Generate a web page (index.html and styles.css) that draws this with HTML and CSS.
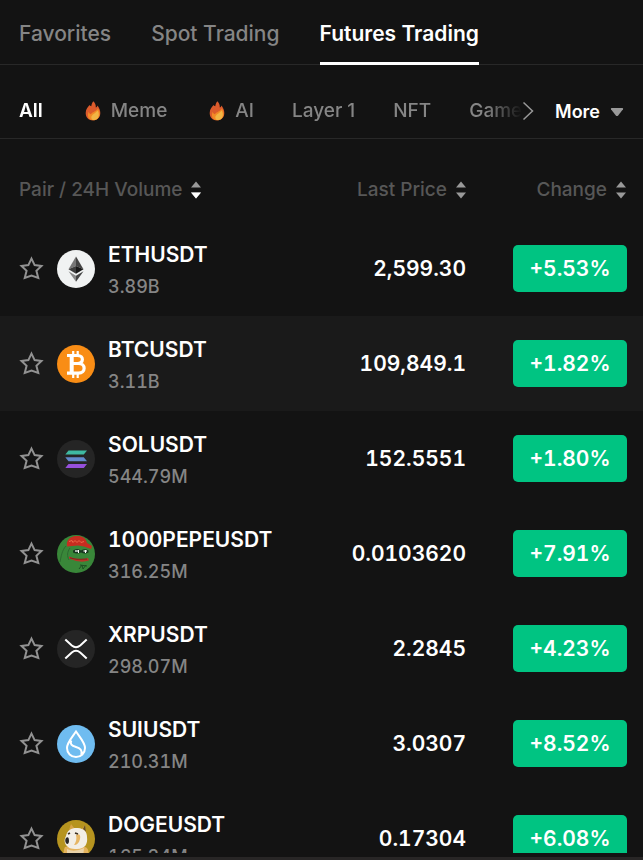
FILE: index.html
```html
<!DOCTYPE html>
<html lang="en">
<head>
<meta charset="utf-8">
<meta name="viewport" content="width=device-width, initial-scale=1">
<title>Markets</title>
<link rel="stylesheet" href="styles.css">
</head>
<body>
<svg class="sprite" aria-hidden="true">
  <symbol id="star" viewBox="0 0 24 24"><path d="m12 2.500 3 6.200 6.600.8-4.900 4.700 1.800 6.800L12 18.800l-6.500 2.200 1.800-6.800L2.400 9.500 9 8.700z" fill="none" stroke="currentColor" stroke-width="1.900"/></symbol>
  <symbol id="flame" viewBox="0 0 16 20"><path d="M8.300.3C7 1.900 6.500 3.500 6.300 5.200 5.500 5.200 5 4.700 4.600 4.100 3 5.700.7 8.200.7 12c0 4.500 2.700 7.300 7.100 7.300 4.500 0 7.500-2.800 7.500-7.300 0-2.800-1.200-5.300-2.800-7.400-.3 1-.9 1.700-1.700 1.900C11 4 10 1.700 8.300.3z" fill="#dc5b2c"/><path d="M12.700 7.500c-.8 2.600-4.700 3-6.900 5.700-1.300-.6-1.900-1.500-2.200-2.500-1.800 4.400.1 8.500 4.400 8.500 4.100 0 6.700-2.500 6.700-6.500 0-2.200-.8-3.900-2-5.200z" fill="#f28a26"/><path d="M12.600 9.400c-1.200 2.300-6.300 3.800-6.300 7 0 1.700 1.200 2.600 2.800 2.600 3.100 0 4.700-2.600 4.700-5.400 0-1.700-.4-3-1.200-4.200z" fill="#f2b544"/></symbol>
  <symbol id="sort" viewBox="0 0 12 18"><path class="up" d="M6 .5 11 6.500H1z"/><path class="down" d="M6 17.500 1 11.500h10z"/></symbol>
</svg>

<nav class="tabs">
  <a class="tab" href="#favorites">Favorites</a>
  <a class="tab" href="#spot">Spot Trading</a>
  <a class="tab active" href="#futures" aria-current="page">Futures Trading</a>
</nav>

<div class="filters">
  <div class="filter-list">
    <button class="filter active">All</button>
    <button class="filter"><svg class="flame"><use href="#flame"/></svg>Meme</button>
    <button class="filter"><svg class="flame"><use href="#flame"/></svg>AI</button>
    <button class="filter">Layer 1</button>
    <button class="filter">NFT</button>
    <button class="filter">Game</button>
  </div>
  <button class="next" aria-label="Next"><svg viewBox="0 0 12 20"><path d="M1.500 1.500 10.500 10l-9 8.500" fill="none" stroke="currentColor" stroke-width="1.500"/></svg></button>
  <button class="more">More<svg viewBox="0 0 14 10"><path d="M1.500 1h11q1 .2.500 1.200L8.200 8.400Q7 9.600 5.800 8.400L1 2.200Q.5 1.200 1.500 1z" fill="currentColor"/></svg></button>
</div>

<main class="market">
<table>
  <thead>
    <tr>
      <th class="pair"><button class="sort desc">Pair / 24H Volume<svg><use href="#sort"/></svg><svg class="on" viewBox="0 0 12 18"><path d="M6 17.500 1 11.500h10z"/></svg></button></th>
      <th class="price"><button class="sort">Last Price<svg><use href="#sort"/></svg></button></th>
      <th class="change"><button class="sort">Change<svg><use href="#sort"/></svg></button></th>
    </tr>
  </thead>
  <tbody>
    <tr>
      <td><div class="coin"><button class="fav" aria-label="Favorite ETHUSDT"><svg><use href="#star"/></svg></button>
        <svg class="logo" viewBox="0 0 38 38"><circle cx="19" cy="19" r="19" fill="#f0f2f2"/><path d="m19 6.500-7.500 12.700L19 16z" fill="#777"/><path d="m19 6.500 7.500 12.700L19 16z" fill="#444"/><path d="m11.500 19.200 7.500 4.500V16z" fill="#3c3c3c"/><path d="m26.500 19.200-7.500 4.500V16z" fill="#181818"/><path d="m11.500 21.200 7.500 4.600v6z" fill="#888"/><path d="M26.500 21.200 19 25.800v6z" fill="#444"/></svg>
        <div class="names"><span class="symbol">ETHUSDT</span><span class="volume">3.89B</span></div></div></td>
      <td class="price">2,599.30</td><td class="change"><span class="badge">+5.53%</span></td>
    </tr>
    <tr class="hover">
      <td><div class="coin"><button class="fav" aria-label="Favorite BTCUSDT"><svg><use href="#star"/></svg></button>
        <svg class="logo" viewBox="0 0 38 38"><circle cx="19" cy="19" r="19" fill="#f98d15"/><g fill="none" stroke="#fff"><path d="M16.200 6v6M20.700 6v6M16.200 27v6M20.700 27v6" stroke-width="2.200"/><path d="M10 10.500h10.500c6.500 0 6.500 8 0 8H15M10 28.200h11.500c7.500 0 7.500-9.700 0-9.700" stroke-width="3.200"/><path d="M14.700 11v17" stroke-width="4"/></g></svg>
        <div class="names"><span class="symbol">BTCUSDT</span><span class="volume">3.11B</span></div></div></td>
      <td class="price">109,849.1</td><td class="change"><span class="badge">+1.82%</span></td>
    </tr>
    <tr>
      <td><div class="coin"><button class="fav" aria-label="Favorite SOLUSDT"><svg><use href="#star"/></svg></button>
        <svg class="logo" viewBox="0 0 38 38"><circle cx="19" cy="19" r="19" fill="#252525"/><path d="M11.500 10.500H30l-3.200 4H8.300z" fill="#3fb9a2"/><path d="M8.300 17.200h18.500l3.200 4H11.500z" fill="#6389cc"/><path d="M11.500 24H30l-3.200 4H8.300z" fill="#9650dc"/></svg>
        <div class="names"><span class="symbol">SOLUSDT</span><span class="volume">544.79M</span></div></div></td>
      <td class="price">152.5551</td><td class="change"><span class="badge">+1.80%</span></td>
    </tr>
    <tr>
      <td><div class="coin"><button class="fav" aria-label="Favorite 1000PEPEUSDT"><svg><use href="#star"/></svg></button>
        <svg class="logo" viewBox="0 0 38 38"><circle cx="19" cy="19" r="19" fill="#398739"/><path d="M9 11C5 15 4 22 3 27M13 13c-3 4-3 8-1 12" fill="none" stroke="#2c6930"/><path d="M10 11.500C9 5 13 1.500 19 1c6-.5 10 2 11 7l5 3-1 3-7-2.500-6-1z" fill="#c72d20"/><path d="m12 6.500 3-1 1 2 2-2 2 2 2-2 2 2 3-1" fill="none" stroke="#ed684a"/><path d="M16 15.500q4-3 8 0 4-2.500 7.500 0v2q-4 2-7.500 0-4 2-8 0z" fill="#193820"/><path d="M18 16h3.500M26.500 16h3.500" stroke="#ced7ce" stroke-width="1.500"/><path d="M21.500 15v3M28.500 15v3" stroke="#fff" stroke-width="1"/><path d="M12 21.500q8 4 19 1.500l1 2.500q-9 3-20-2z" fill="#b63527"/><path d="m13 23 7 1.300 10-.2" stroke="#671e18" stroke-width=".7" fill="none"/><path d="m22 34 3-4 1 4 3-4m-6 0 7 1" fill="none" stroke="#1e5023"/></svg>
        <div class="names"><span class="symbol">1000PEPEUSDT</span><span class="volume">316.25M</span></div></div></td>
      <td class="price">0.0103620</td><td class="change"><span class="badge">+7.91%</span></td>
    </tr>
    <tr>
      <td><div class="coin"><button class="fav" aria-label="Favorite XRPUSDT"><svg><use href="#star"/></svg></button>
        <svg class="logo" viewBox="0 0 38 38"><circle cx="19" cy="19" r="19" fill="#252525"/><path d="m8.300 9.500 6.500 6q4.200 3.500 8.400 0l6.500-6M8.300 28.500l6.500-6q4.200-3.500 8.400 0l6.500 6" fill="none" stroke="#fff" stroke-width="2"/></svg>
        <div class="names"><span class="symbol">XRPUSDT</span><span class="volume">298.07M</span></div></div></td>
      <td class="price">2.2845</td><td class="change"><span class="badge">+4.23%</span></td>
    </tr>
    <tr>
      <td><div class="coin"><button class="fav" aria-label="Favorite SUIUSDT"><svg><use href="#star"/></svg></button>
        <svg class="logo" viewBox="0 0 38 38"><circle cx="19" cy="19" r="19" fill="#6fbcf0"/><path d="M19 6.500C15.500 12 10 17.500 10 23c0 5.300 4 9 9 9s9-3.700 9-9c0-5.500-5.500-11-9-16.500zM14.300 15.500c-1.500 3.500.2 5.200 4.700 6.500 4.200 1.200 6.600 3.300 5.300 7.500" fill="none" stroke="#fff" stroke-width="2"/></svg>
        <div class="names"><span class="symbol">SUIUSDT</span><span class="volume">210.31M</span></div></div></td>
      <td class="price">3.0307</td><td class="change"><span class="badge">+8.52%</span></td>
    </tr>
    <tr>
      <td><div class="coin"><button class="fav" aria-label="Favorite DOGEUSDT"><svg><use href="#star"/></svg></button>
        <svg class="logo" viewBox="0 0 38 38"><circle cx="19" cy="19" r="19" fill="#b6941f"/><path d="M7 38c-1-6 0-9 1-11l5-1 15 1c4 1 4 6 3 11z" fill="#e4b35e"/><path d="m12 10 2-6 4 5zM24 10l4-5 1 8z" fill="#d8a447"/><path d="m26 9 2-4 1 7z" fill="#655025"/><path d="M9 16c1-6 6-8.500 12-8s9 4 9 9c1 7-2 12-10 12-6 0-10-1-12-6-1-3 0-5 1-7z" fill="#f2eee6"/><path d="M19 15c3-2 5 0 4 4-1 4-3 6-6 6 2-3 3-6 2-10z" fill="#e6b665"/><path d="M9 18c2-2 3 0 3 3s-2 4-3 2c-1-1-1-4 0-5z" fill="#292725"/><path d="m11 14 2-1m5 0 3 1" stroke="#3c3123" stroke-width="1.800"/><path d="M10 29q7 4 17-1l-1 10H10z" fill="#ead3a9"/></svg>
        <div class="names"><span class="symbol">DOGEUSDT</span><span class="volume">165.34M</span></div></div></td>
      <td class="price">0.17304</td><td class="change"><span class="badge">+6.08%</span></td>
    </tr>
  </tbody>
</table>
</main>
<footer class="edge"></footer>
</body>
</html>
```

FILE: styles.css
```css
* { box-sizing: border-box; }

body {
  margin: 0;
  height: 100vh;
  display: flex;
  flex-direction: column;
  overflow: hidden;
  background: #131313;
  color: #fff;
  font-family: Inter, "Liberation Sans", sans-serif;
}

button {
  padding: 0;
  border: 0;
  background: none;
  color: inherit;
  font: inherit;
  white-space: nowrap;
  cursor: pointer;
}

.sprite { position: absolute; width: 0; height: 0; }

.tabs {
  flex: none;
  display: flex;
  gap: 40px;
  padding: 0 19px;
  box-shadow: inset 0 -1px #282828;
}

.tab {
  padding: 20px 0 14px;
  border-bottom: 3px solid transparent;
  color: #858585;
  font-size: 21px;
  line-height: 28px;
  font-weight: 500;
  text-decoration: none;
  white-space: nowrap;
}

.tab.active {
  border-color: #fff;
  color: #fff;
  font-weight: 600;
}

.filters {
  flex: none;
  display: flex;
  align-items: center;
  height: 74px;
  padding: 18px 19px 0;
  border-bottom: 1px solid #282828;
  font-size: 19px;
  line-height: 24px;
}

.filter-list {
  flex: 1;
  min-width: 0;
  display: flex;
  gap: 38px;
  overflow: hidden;
  color: #858585;
  font-weight: 500;
  mask-image: linear-gradient(to right, #000 calc(100% - 36px), transparent);
}

.filter { display: flex; align-items: center; flex: none; }
.filter.active { color: #fff; font-weight: 600; }
.flame { width: 16px; height: 20px; margin: 0 10px 0 4px; }

.next { color: #999; }
.next svg { display: block; width: 12px; height: 20px; }

.more {
  display: flex;
  align-items: center;
  gap: 10px;
  margin-left: 21px;
  padding-top: 2px;
  font-size: 18px;
  font-weight: 600;
}
.more svg { width: 14px; height: 10px; color: #999; }

.market { flex: 1; min-height: 0; overflow: hidden; }

table {
  width: 100%;
  border-collapse: collapse;
  table-layout: fixed;
  font-variant-numeric: tabular-nums;
}

th, td { padding: 0; text-align: left; }
th { height: 82px; vertical-align: top; font-weight: 500; }
td { height: 95px; }

th.pair { padding-left: 19px; }
th.price { width: 180px; }
th.change { width: 176px; }
.price, .change { text-align: right; }
.change { padding-right: 16px; }

.sort {
  display: inline-flex;
  align-items: center;
  gap: 8px;
  margin-top: 39px;
  color: #575757;
  font-size: 19px;
  line-height: 24px;
  font-variant-numeric: normal;
}
.sort svg { width: 12px; height: 18px; fill: #999; }
.sort .on { margin-left: -20px; fill: #fff; }

.hover { background: #1a1a1a; }

.coin {
  display: flex;
  align-items: center;
  padding-left: 19px;
}

.fav { color: #929292; }
.fav svg { display: block; width: 25px; height: 25px; }
.logo { flex: none; width: 38px; height: 38px; margin: 0 13px; }

.names { display: flex; flex-direction: column; gap: 4px; padding-top: 4px; }
.symbol { font-size: 21px; line-height: 28px; font-weight: 600; }
.volume { color: #858585; font-size: 18px; line-height: 28px; font-weight: 500; }

td.price { padding-right: 1px; font-size: 21px; font-weight: 600; }

.badge {
  display: inline-block;
  width: 114px;
  border-radius: 5px;
  background: #00c482;
  font-size: 21px;
  line-height: 47px;
  font-weight: 600;
  text-align: center;
  vertical-align: middle;
}

.edge {
  flex: none;
  height: 7px;
  border-bottom: 3px solid #282626;
}
```
